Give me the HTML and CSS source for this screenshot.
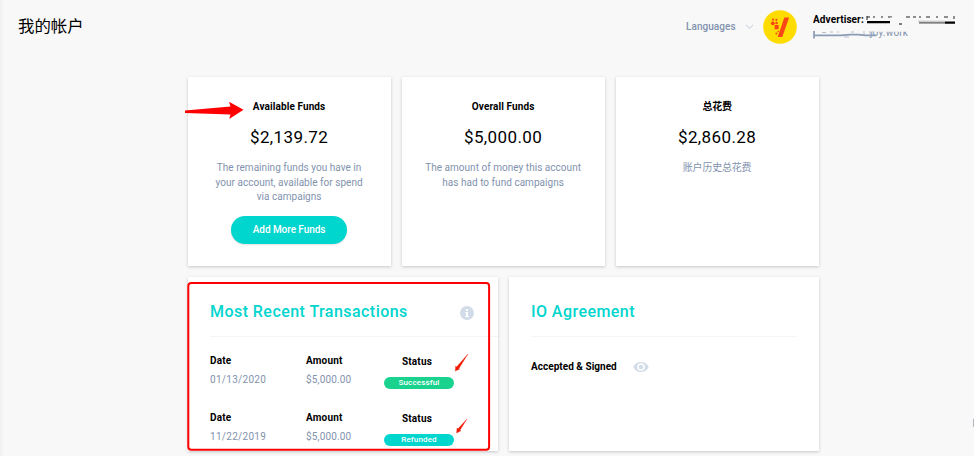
FILE: index.html
```html
<!DOCTYPE html>
<html lang="zh-CN">
<head>
<meta charset="utf-8">
<title>我的帐户</title>
<link rel="stylesheet" href="styles.css">
</head>
<body>
<header class="top">
  <h1>我的帐户</h1>
  <div class="languages"><span>Languages</span>
    <svg width="9" height="6" viewBox="0 0 9 6"><path d="M1 .8 4.5 4.5 8 .8" fill="none" stroke="#d0d9e4" stroke-width="1.1"/></svg>
  </div>
  <svg class="avatar" width="34" height="34" viewBox="0 0 34 34">
    <circle cx="17" cy="17" r="16.8" fill="#ffdc00"/>
    <path d="M21.3 7.5h4.8L19.3 27h-4.6z" fill="#fa4616"/>
    <path d="m10 7.8 1.5 2.6H8.6zM11.6 15h4v4.2h-4z" fill="#fa4616"/>
    <circle cx="13.4" cy="9.8" r="1.1" fill="#fa4616"/><circle cx="9.8" cy="13.3" r="1.9" fill="#fa4616"/><circle cx="13.6" cy="13" r="1.3" fill="#fa4616"/><circle cx="13.4" cy="23.4" r="1" fill="#fa4616"/><circle cx="15.3" cy="21.5" r=".8" fill="#fa4616"/>
  </svg>
  <div class="account">
    <div class="advertiser">Advertiser:</div>
    <div class="domain">joy.work</div>
    <svg class="redaction" width="150" height="28" viewBox="0 0 150 28">
      <path d="M56 14h46v4.8H56z" fill="#f8f8f8"/>
      <path d="M54 3v4M54 4h3M60 4h2M68 4h2M76 3v2M78 3v1.5M93 4h4M100 4h3M106 4h2M113 4h4M123 4h2M131 4h2M134 3v2M141 3v3" fill="none" stroke="#222" stroke-width="1"/>
      <path d="M54 9.2h23M132 9.7h10" stroke="#000" stroke-width="2.2"/>
      <path d="M86 11h3M106 9.8h26" stroke="#555" stroke-width="1.3"/>
      <path d="M105 8.2h27" stroke="#bbb" stroke-width="1"/>
      <path d="M1 18v7.5M1 22.4h27l9-.8h8l8 .8h10" fill="none" stroke="#8b9bb5" stroke-width="1.7"/>
      <path d="M9 19.5h4M17 19h3M24 19h2M31 24h5M38 19h3M51 18v3M57 18v3M60 18v3" fill="none" stroke="#b4bfd0" stroke-width="1"/>
    </svg>
  </div>
</header>
<main>
  <section class="funds">
    <article class="card fund"><h2>Available Funds</h2><strong>$2,139.72</strong><p>The remaining funds you have in<br>your account, available for spend<br>via campaigns</p><button>Add More Funds</button></article>
    <article class="card fund"><h2>Overall Funds</h2><strong>$5,000.00</strong><p>The amount of money this account<br>has had to fund campaigns</p></article>
    <article class="card fund"><h2 class="cjk">总花费</h2><strong>$2,860.28</strong><p class="cjk">账户历史总花费</p></article>
  </section>
  <section class="details">
    <article class="card panel transactions">
      <div class="panel-head"><h3>Most Recent Transactions</h3>
        <svg width="14" height="14" viewBox="0 0 14 14"><circle cx="7" cy="7" r="7" fill="#d2dce8"/><path d="M6 3h2v2H6zM5.2 6H8v4h.9v1.1H5.2V10H6V7h-.8z" fill="#fff"/></svg>
      </div>
      <div class="row"><div><b>Date</b><span>01/13/2020</span></div><div><b>Amount</b><span class="money">$5,000.00</span></div><div class="status"><b>Status</b><i class="success">Successful</i></div></div>
      <div class="row"><div><b>Date</b><span>11/22/2019</span></div><div><b>Amount</b><span class="money">$5,000.00</span></div><div class="status"><b>Status</b><i>Refunded</i></div></div>
    </article>
    <article class="card panel">
      <div class="panel-head"><h3>IO Agreement</h3></div>
      <div class="signed"><b>Accepted &amp; Signed</b>
        <svg width="16" height="12" viewBox="0 0 16 12"><path d="M.3 6C3.2-.7 12.8-.7 15.7 6 12.8 12.7 3.2 12.7.3 6z" fill="#d2dce8"/><circle cx="8" cy="6" r="3" fill="#d2dce8" stroke="#fff" stroke-width="1.6"/></svg>
      </div>
    </article>
  </section>
</main>
<svg class="annotations" width="974" height="456" viewBox="0 0 974 456">
  <path d="M185 110.4 230.5 106.5 229 101.8 243.5 109.8 229.2 119 230.5 114.4 185 112.9z" fill="#f00"/>
  <rect x="188.3" y="283" width="300.8" height="166.7" rx="3" fill="none" stroke="#f00" stroke-width="2"/>
  <path d="m468 354-9.3 14.8 1.2.2-4.7 2 .5-5 .8.9zM467 419l-7.2 11.4 1.2.4-4.4 2.2.4-5 1 .8z" fill="#f21800" stroke="#f21800" stroke-width=".3"/>
</svg>
<div class="edge-handle"></div>
</body>
</html>
```
FILE: styles.css
```css
* { box-sizing: border-box; }
body { margin: 0; width: 974px; height: 456px; overflow: hidden; position: relative; background: linear-gradient(90deg, #f0f0f0, #f8f8f8 4px); font-family: Roboto, "Noto Sans CJK SC", sans-serif; font-size: 10px; color: #000; }
h1, h2, h3, p { margin: 0; font-weight: 400; }
svg { display: block; flex: none; }
.top { height: 77px; display: flex; align-items: flex-start; }
.top h1 { width: 668px; padding-left: 18px; margin-top: 13px; font: 16.4px/24px "Noto Sans CJK SC", sans-serif; }
.languages { width: 77px; margin: 21px 0 0 18px; display: flex; align-items: center; gap: 9px; color: #8292ad; line-height: 12px; font-weight: 500; letter-spacing: .05px; }
.languages span { width: 50px; }
.avatar { margin: 10px 16px 0 0; }
.account { position: relative; width: 150px; padding-top: 14px; }
.advertiser { font-weight: 700; line-height: 12px; letter-spacing: .1px; }
.domain { padding-left: 57px; color: #8292ad; line-height: 14px; letter-spacing: .2px; }
.redaction { position: absolute; left: 0; top: 13px; }
main { width: 631px; margin-left: 187.6px; }
.funds, .details { display: grid; gap: 11px; }
.funds { grid-template-columns: repeat(3, 1fr); }
.details { grid-template-columns: repeat(2, 1fr); margin-top: 11px; }
.card { background: #fff; box-shadow: 0 1px 3px rgba(0,0,0,.2); }
.fund { height: 189px; padding-top: 23px; display: flex; flex-direction: column; align-items: center; text-align: center; }
.fund h2 { font-size: 10px; font-weight: 700; line-height: 14px; letter-spacing: .1px; }
.fund strong { margin-top: 12px; font-size: 17px; line-height: 22px; font-weight: 400; letter-spacing: .4px; }
.fund p { margin-top: 13px; line-height: 14.6px; color: #8292ad; letter-spacing: .03px; }
.fund .cjk { letter-spacing: -.2px; }
.fund button { width: 116px; height: 28px; margin-top: 11px; border: 0; border-radius: 14px; background: #00d5ce; box-shadow: 0 1px 2px rgba(0,0,0,.12); color: #fff; font: 500 10px/28px Roboto, sans-serif; letter-spacing: -.05px; padding: 0; }
.panel { height: 174px; padding-left: 22.4px; }
.panel-head { width: 266px; height: 60px; padding-top: 25px; display: flex; justify-content: space-between; align-items: flex-start; border-bottom: 1px solid #f5f5f5; }
.transactions .panel-head { width: auto; padding-right: 24px; }
.panel-head svg { margin-top: 4px; }
.panel-head h3 { font-size: 16px; line-height: 20px; font-weight: 500; color: #00d5ce; letter-spacing: .45px; }
.row { height: 57px; padding-top: 17px; display: grid; grid-template-columns: 96px 78px 70px; }
.row b, .row span { display: block; line-height: 14px; letter-spacing: .2px; }
.row span { margin-top: 5px; color: #8292ad; letter-spacing: .3px; }
.row .money { letter-spacing: .15px; }
.status { padding-top: 1px; }
.status b { padding-right: 4px; text-align: center; }
.status i { display: block; width: 70px; height: 12px; margin-top: 8px; border-radius: 6px; background: #00d5ce; color: #fff; text-align: center; font: 500 8px/12px Roboto, sans-serif; letter-spacing: .15px; }
.status .success { background: #19d28e; }
.signed { display: flex; align-items: center; gap: 16px; height: 14px; margin-top: 22px; letter-spacing: .03px; }
.signed svg { margin-top: 2px; }
.annotations { position: absolute; left: 0; top: 0; pointer-events: none; }
.edge-handle { position: absolute; right: 0; top: 419px; width: 1px; height: 8px; background: #b5b5c2; }
```
